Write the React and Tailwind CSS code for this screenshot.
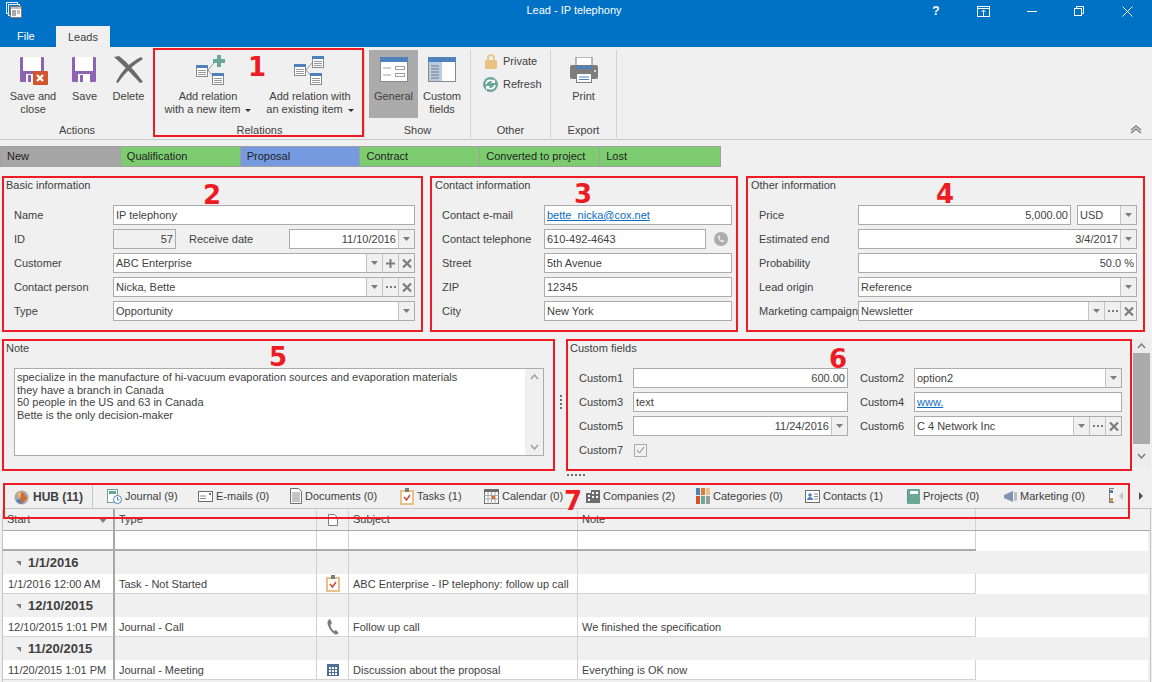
import React from "react";

const Caret = () => (
  <svg width="7" height="4" viewBox="0 0 7 4"><path d="M0 0h7L3.500 4z" fill="#7d7d7d" /></svg>
);
const XIcon = () => (
  <svg width="10" height="9" viewBox="0 0 10 9"><path d="M1 .5l8 8M9 .5l-8 8" stroke="#7d7d7d" strokeWidth="2.200" /></svg>
);
const Plus = () => (
  <svg width="9" height="9" viewBox="0 0 9 9"><path d="M4.500 0v9M0 4.500h9" stroke="#7d7d7d" strokeWidth="2" /></svg>
);
const Dots = () => (
  <svg width="10" height="2" viewBox="0 0 10 2"><path d="M0 0h2v2H0zM4 0h2v2H4zM8 0h2v2H8z" fill="#7d7d7d" /></svg>
);
const BTN = { c: <Caret />, x: <XIcon />, p: <Plus />, d: <Dots /> };

function Field({ value, right, link, buttons = "", disabled, className = "" }) {
  return (
    <div className={`flex h-5 items-stretch border border-[#ababab] ${disabled ? "bg-[#f0f0f0]" : "bg-white"} ${className}`}>
      <div className={`flex-1 min-w-0 px-[2px] leading-[18px] whitespace-nowrap overflow-hidden ${right ? "text-right" : ""} ${link ? "text-[#0b6cc2] underline" : ""}`}>
        {value}
      </div>
      {buttons.split("").map((b, i) => (
        <div key={i} className="w-4 flex items-center justify-center border-l border-[#c4c4c4] bg-[#f0f0f0]">{BTN[b]}</div>
      ))}
    </div>
  );
}

function Row({ label, labelW, children }) {
  return (
    <div className="flex h-5 items-center">
      <div style={{ width: labelW }} className="shrink-0 pt-[1px] whitespace-nowrap">{label}</div>
      {children}
    </div>
  );
}

function Panel({ title, className = "", titleClass = "pl-[2px]", children }) {
  return (
    <div className={`shrink-0 border-2 border-[#ed1c24] ${className}`}>
      <div className={`h-[14px] leading-[14px] whitespace-nowrap ${titleClass}`}>{title}</div>
      {children}
    </div>
  );
}

const SaveIcon = ({ withX }) => (
  <svg width="30" height="30" viewBox="0 0 30 30">
    <path d="M2 3a1 1 0 0 1 1-1h22a1 1 0 0 1 1 1v23a1 1 0 0 1-1 1H3a1 1 0 0 1-1-1z" fill="#8f63b3" />
    <rect x="5" y="2" width="18" height="14" fill="#fff" />
    <rect x="8" y="19" width="12" height="8" fill="#fff" />
    <rect x="10" y="20" width="3" height="7" fill="#8f63b3" />
    {withX && (
      <>
        <rect x="15" y="16" width="15" height="14" rx="1" fill="#d2552d" />
        <path d="M19 20l6 6M25 20l-6 6" stroke="#fff" strokeWidth="2.400" />
      </>
    )}
  </svg>
);

const DeleteIcon = () => (
  <svg width="30" height="28" viewBox="0 0 30 28" fill="#6b6b6b">
    <path d="M0 1L5 0C12 5 22 16 29 26L26 27C18 18 8 8 0 1z" />
    <path d="M29 3L27 1C18 5 8 14 2 26L4 27C10 18 19 9 29 3z" />
  </svg>
);

const Mini = ({ x, y }) => (
  <g>
    <rect x={x + 0.5} y={y + 0.5} width="11" height="11" fill="#fff" stroke="#8a8a8a" />
    <rect x={x} y={y} width="12" height="3" fill="#4f81bd" />
    <path d={`M${x + 2} ${y + 5.5}h8M${x + 2} ${y + 7.5}h8M${x + 2} ${y + 9.5}h8`} stroke="#9a9a9a" />
  </g>
);

const RelNew = () => (
  <div className="ml-[7px]">
    <svg width="32" height="30" viewBox="0 0 32 30" className="block">
      <path d="M12 15l6-7M12 15l6 7" stroke="#9a9a9a" />
      <Mini x={0} y={10} />
      <Mini x={16} y={18} />
      <path d="M17 6h12M23 0v12" stroke="#6ba797" strokeWidth="4" />
    </svg>
  </div>
);
const RelExisting = () => (
  <svg width="32" height="30" viewBox="0 0 32 30">
    <path d="M12 15l6-7M12 15l6 7" stroke="#9a9a9a" />
    <Mini x={0} y={9} />
    <Mini x={18} y={1} />
    <Mini x={16} y={18} />
  </svg>
);
const GeneralIcon = () => (
  <svg width="28" height="26" viewBox="0 0 28 26">
    <rect x=".5" y=".5" width="27" height="24" fill="#fff" stroke="#8a8a8a" />
    <rect width="28" height="5" fill="#4f81bd" />
    <path d="M3 11h8M3 18h8" stroke="#a0a0a0" />
    <rect x="15.500" y="9.500" width="9" height="3" fill="#fff" stroke="#a0a0a0" />
    <rect x="15.500" y="16.500" width="9" height="3" fill="#fff" stroke="#a0a0a0" />
  </svg>
);
const CustomIcon = () => (
  <svg width="28" height="26" viewBox="0 0 28 26">
    <rect x=".5" y=".5" width="27" height="24" fill="#fff" stroke="#8a8a8a" />
    <rect x="1" y="5" width="13" height="19" fill="#b8cce4" />
    <rect width="28" height="5" fill="#4f81bd" />
    <path d="M3 9h8M3 12h8M3 15h8M3 18h8M3 21h8" stroke="#7a7a7a" />
  </svg>
);
const Lock = () => (
  <svg width="12" height="15" viewBox="0 0 12 15">
    <path d="M3 7V4a3 3 0 0 1 6 0v3" fill="none" stroke="#e8c98e" strokeWidth="2" />
    <rect y="6" width="12" height="9" rx="1" fill="#eac083" />
  </svg>
);
const RefreshI = () => (
  <svg width="15" height="15" viewBox="0 0 15 15">
    <circle cx="7.500" cy="7.500" r="7.500" fill="#6ba797" />
    <path d="M3 7a4.500 4.500 0 0 1 8-2M12 8a4.500 4.500 0 0 1-8 2" fill="none" stroke="#fff" strokeWidth="1.600" />
    <path d="M12 2v4H8zM3 13V9h4z" fill="#fff" />
  </svg>
);
const Printer = () => (
  <svg width="28" height="26" viewBox="0 0 28 26">
    <rect x="6" y="0" width="16" height="10" fill="#fff" stroke="#7d7d7d" />
    <path d="M2 8h24a2 2 0 0 1 2 2v10a2 2 0 0 1-2 2H2a2 2 0 0 1-2-2V10a2 2 0 0 1 2-2z" fill="#7d7d7d" />
    <rect x="6" y="9" width="16" height="3" fill="#4f81bd" />
    <rect x="24" y="13" width="2" height="2" fill="#d8d8d8" />
    <rect x="6.500" y="16.500" width="15" height="9" fill="#fff" stroke="#7d7d7d" />
    <path d="M9 20h10M9 22.500h10" stroke="#4f81bd" />
  </svg>
);

function RibbonBtn({ icon, lines, caret, w, active }) {
  return (
    <div style={{ width: w }} className={`h-[68px] flex flex-col items-center pt-[3px] ${active ? "bg-[#ababab]" : ""}`}>
      <div className="h-[33px] flex items-center justify-center">{icon}</div>
      <div className="mt-[4px] text-center leading-[13px]">
        {lines.map((l, i) => (
          <div key={i} className="whitespace-nowrap">
            {l}
            {caret && i === lines.length - 1 && (
              <span className="inline-block ml-[5px] align-middle w-0 h-0 border-x-[3px] border-t-[3px] border-x-transparent border-t-[#333]" />
            )}
          </div>
        ))}
      </div>
    </div>
  );
}

function Group({ label, w, children }) {
  return (
    <div style={{ width: w }} className="shrink-0 flex flex-col h-[88px] border-r border-[#d2d2d2]">
      <div className="h-[68px] flex justify-start">{children}</div>
      <div className="h-[15px] mt-auto text-center leading-[15px] whitespace-nowrap">{label}</div>
    </div>
  );
}

const TabIcons = {
  hub: (
    <svg width="15" height="15" viewBox="0 0 15 15">
      <circle cx="7.500" cy="7.500" r="7" fill="#a8a8a8" />
      <path d="M7.500 1L13 8l-5 6-2-5z" fill="#d2692d" />
      <path d="M2 10l4-1 2 5-4-1z" fill="#4f81bd" />
      <path d="M3 4l3 5 1.500-8z" fill="#e8b96e" />
    </svg>
  ),
  journal: (
    <svg width="15" height="15" viewBox="0 0 15 15">
      <rect x=".5" y=".5" width="10" height="13" fill="#fff" stroke="#6ba797" />
      <rect x="2" y="2" width="7" height="3" fill="#6ba797" />
      <circle cx="10.500" cy="10.500" r="4" fill="#fff" stroke="#4f81bd" />
      <path d="M10.500 8v3h2" fill="none" stroke="#4f81bd" />
    </svg>
  ),
  email: (
    <svg width="15" height="11" viewBox="0 0 15 11">
      <rect x=".5" y=".5" width="14" height="10" fill="#fff" stroke="#6d6d6d" />
      <path d="M2 5h6M2 7.500h6" stroke="#8a8a8a" />
      <rect x="11" y="2" width="2" height="2" fill="#6d6d6d" />
    </svg>
  ),
  doc: (
    <svg width="12" height="16" viewBox="0 0 12 16">
      <path d="M.5.5h8l3 3v12H.500z" fill="#fff" stroke="#6d6d6d" />
      <path d="M2 5h8M2 7h8M2 9h8M2 11h8M2 13h8" stroke="#8a8a8a" />
    </svg>
  ),
  task: (
    <svg width="14" height="17" viewBox="0 0 14 17">
      <rect y="2" width="14" height="15" fill="#e8c08a" />
      <rect x="2" y="4" width="10" height="11" fill="#fff" />
      <rect x="5" y="0" width="4" height="4" fill="#7d7d7d" />
      <path d="M4 9l2.500 3L10 7" fill="none" stroke="#d2492d" strokeWidth="1.500" />
    </svg>
  ),
  cal: (
    <svg width="15" height="15" viewBox="0 0 15 15">
      <rect x=".5" y=".5" width="14" height="14" fill="#fff" stroke="#6d6d6d" />
      <rect width="15" height="3" fill="#6d6d6d" />
      <path d="M4 3v12M7.500 3v12M11 3v12M0 6.500h15M0 10h15" stroke="#a8a8a8" />
      <rect x="8" y="7" width="3" height="3" fill="#d2692d" />
    </svg>
  ),
  company: (
    <svg width="14" height="14" viewBox="0 0 14 14">
      <path d="M0 4h5V1h9v13H0z" fill="#6d6d6d" />
      <path d="M2 6h2v2H2zM6 3h2v2H6zM10 3h2v2h-2zM6 7h2v2H6zM10 7h2v2h-2zM2 10h2v2H2z" fill="#fff" />
    </svg>
  ),
  cat: (
    <svg width="14" height="16" viewBox="0 0 14 16">
      <rect width="4" height="7" fill="#4f81bd" />
      <rect x="5" width="4" height="7" fill="#e07b2d" />
      <rect x="10" width="4" height="7" fill="#e8c08a" />
      <rect y="8" width="4" height="8" fill="#d2552d" />
      <rect x="5" y="8" width="4" height="8" fill="#6ba797" />
      <rect x="10" y="8" width="4" height="8" fill="#9a9a9a" />
    </svg>
  ),
  contact: (
    <svg width="15" height="13" viewBox="0 0 15 13">
      <rect x=".5" y=".5" width="14" height="12" fill="#fff" stroke="#6d6d6d" />
      <circle cx="5" cy="5" r="1.800" fill="#4f81bd" />
      <path d="M2 10c0-2 1.500-3 3-3s3 1 3 3z" fill="#4f81bd" />
      <path d="M9 4h4M9 6.500h4M9 9h4" stroke="#8a8a8a" />
    </svg>
  ),
  project: (
    <svg width="13" height="15" viewBox="0 0 13 15">
      <rect width="13" height="15" rx="1" fill="#6ba797" />
      <rect x="3" y="2" width="8" height="3" fill="#fff" />
      <path d="M0 2v11" stroke="#4d4d4d" strokeDasharray="1 1" />
    </svg>
  ),
  marketing: (
    <svg width="13" height="11" viewBox="0 0 13 11">
      <path d="M0 4l9-4v11L0 7z" fill="#7f93b0" />
      <rect x="10" y="1" width="3" height="9" rx="1" fill="#bdbdbd" />
    </svg>
  ),
};

const TABS = [
  ["journal", "Journal (9)", 93, 14],
  ["email", "E-mails (0)", 92, 12],
  ["doc", "Documents (0)", 110, 12],
  ["task", "Tasks (1)", 84, 12],
  ["cal", "Calendar (0)", 102, 12],
  ["company", "Companies (2)", 110, 12],
  ["cat", "Categories (0)", 109, 12],
  ["contact", "Contacts (1)", 102, 12],
  ["project", "Projects (0)", 97, 12],
  ["marketing", "Marketing (0)", 104, 12],
];

const COLS = "grid grid-cols-[112px_202px_32px_229px_398px_172px]";

function Cell({ children, thick, center, noBorder, className = "" }) {
  return (
    <div className={`min-w-0 whitespace-nowrap overflow-hidden px-[4px] flex items-center ${center ? "justify-center" : ""} ${thick ? "border-r-2 border-[#a8a8a8]" : noBorder ? "" : "border-r border-[#d2d2d2]"} ${className}`}>
      {children}
    </div>
  );
}

function GroupRow({ label }) {
  return (
    <div className={`${COLS} h-[23px] bg-[#f0f0f0]`}>
      <Cell thick className="overflow-visible pt-[1px]">
        <span className="inline-block ml-[9px] mr-[7px] w-0 h-0 border-l-[5px] border-t-[5px] border-l-transparent border-t-[#7d7d7d]" />
        <span className="font-bold text-[13px]">{label}</span>
      </Cell>
      <Cell /><Cell /><Cell /><Cell noBorder /><Cell noBorder />
    </div>
  );
}

function DataRow({ start, type, icon, subject, note }) {
  return (
    <div className={`${COLS} h-[20px]`}>
      <Cell thick className="bg-white pl-[5px] pt-[1px] border-b border-b-[#d2d2d2]">{start}</Cell>
      <Cell className="bg-white pt-[1px] border-b border-b-[#d2d2d2]">{type}</Cell>
      <Cell center className="bg-white px-0 border-b border-b-[#d2d2d2]">{icon}</Cell>
      <Cell className="bg-white pt-[1px] border-b border-b-[#d2d2d2]">{subject}</Cell>
      <Cell className="bg-white pt-[1px] border-b border-b-[#d2d2d2]">{note}</Cell>
      <Cell noBorder className="bg-white" />
    </div>
  );
}

const Num = ({ n, x, y }) => (
  <div style={{ left: x - 9, top: y - 15 }} className="absolute font-['DejaVu_Sans'] font-bold text-[26px] leading-[30px] text-[#ed1c24]">{n}</div>
);

export default function App() {
  return (
    <div className="relative w-[1152px] h-[682px] overflow-hidden bg-[#f0f0f0] text-[#3f3f3f] text-[11px] font-['Liberation_Sans',sans-serif]">
      {/* Title bar */}
      <div className="h-[47px] bg-[#0072c6] flex flex-col">
        <div className="h-[25px] flex items-start text-white">
          <div className="w-[240px] pl-[6px] pt-[2px]">
            <svg width="16" height="16" viewBox="0 0 16 16" fill="none" stroke="#e8eef5">
              <rect x=".5" y=".5" width="11" height="11" />
              <rect x="2.500" y="2.500" width="11" height="11" fill="#0072c6" />
              <rect x="4.500" y="4.500" width="11" height="11" fill="#fff" stroke="#7d7d7d" />
              <rect x="6" y="8" width="4" height="6" fill="#a8a8a8" stroke="none" />
              <path d="M5 6h10M11 9h3M11 11h3" stroke="#7d7d7d" />
            </svg>
          </div>
          <div className="flex-1 text-center pr-[4px] pt-[2px] leading-[16px]">Lead - IP telephony</div>
          <div className="w-[240px] flex justify-end pr-[1px]">
            <div className="w-[48px] h-[22px] flex items-center justify-center font-bold text-[12px]">?</div>
            <div className="w-[48px] h-[22px] flex items-center justify-center">
              <svg width="13" height="11" viewBox="0 0 13 11" fill="none" stroke="#fff"><rect x=".5" y=".5" width="12" height="10" /><path d="M0 2.500h13M6.500 10V4M4.500 6l2-2 2 2" /></svg>
            </div>
            <div className="w-[48px] h-[22px] flex items-center justify-center"><div className="w-[10px] h-px bg-white" /></div>
            <div className="w-[48px] h-[22px] flex items-center justify-center">
              <svg width="10" height="10" viewBox="0 0 10 10" fill="none" stroke="#fff"><rect x=".5" y="2.500" width="7" height="7" /><path d="M2.500 2.500v-2h7v7h-2" /></svg>
            </div>
            <div className="w-[48px] h-[22px] flex items-center justify-center">
              <svg width="11" height="11" viewBox="0 0 11 11" stroke="#fff"><path d="M.5.5l10 10M10.500.5l-10 10" /></svg>
            </div>
          </div>
        </div>
        <div className="h-[22px] flex">
          <div className="w-[56px] pl-[17px] text-white leading-[22px]">File</div>
          <div className="w-[54px] bg-[#f0f0f0] text-center leading-[22px] mt-[1px]">Leads</div>
        </div>
      </div>

      {/* Ribbon */}
      <div className="h-[93px] border-b border-[#c8c8c8] pt-[3px] flex relative">
        <div className="flex h-[88px]">
          <Group label="Actions" w={155}>
            <div className="w-[5px]" />
            <RibbonBtn w={56} icon={<SaveIcon withX />} lines={["Save and", "close"]} />
            <RibbonBtn w={47} icon={<SaveIcon />} lines={["Save"]} />
            <RibbonBtn w={41} icon={<DeleteIcon />} lines={["Delete"]} />
          </Group>
          <Group label="Relations" w={210}>
            <div className="w-[3px]" />
            <RibbonBtn w={100} icon={<RelNew />} lines={["Add relation", "with a new item"]} caret />
            <RibbonBtn w={104} icon={<RelExisting />} lines={["Add relation with", "an existing item"]} caret />
          </Group>
          <Group label="Show" w={106}>
            <div className="w-[4px]" />
            <RibbonBtn w={49} active icon={<GeneralIcon />} lines={["General"]} />
            <RibbonBtn w={48} icon={<CustomIcon />} lines={["Custom", "fields"]} />
          </Group>
          <Group label="Other" w={80}>
            <div className="w-full pl-[12px] pt-[4px] flex flex-col gap-[8px]">
              <div className="h-[15px] flex items-center gap-[5px]"><span className="w-[15px] flex justify-center"><Lock /></span>Private</div>
              <div className="h-[15px] flex items-center gap-[5px]"><RefreshI />Refresh</div>
            </div>
          </Group>
          <Group label="Export" w={66}>
            <RibbonBtn w={66} icon={<Printer />} lines={["Print"]} />
          </Group>
        </div>
        <div className="absolute right-[10px] bottom-[5px]">
          <svg width="12" height="9" viewBox="0 0 12 9" fill="none" stroke="#7d7d7d" strokeWidth="1.500"><path d="M1 5l5-4 5 4M1 8l5-4 5 4" /></svg>
        </div>
      </div>

      {/* Status strip */}
      <div className="mt-[6px] flex w-[721px] h-[21px] border border-[#a0a0a0] bg-[#7dcd70]">
        {[
          ["New", "bg-[#a6a6a6]"],
          ["Qualification", ""],
          ["Proposal", "bg-[#769ae0]"],
          ["Contract", ""],
          ["Converted to project", ""],
          ["Lost", ""],
        ].map(([t, c], i) => (
          <div key={t} className={`w-[120px] pl-[6px] leading-[18px] whitespace-nowrap text-[#1f1f1f] ${i < 5 ? "border-r border-[#a0a0a0]" : ""} ${c}`}>{t}</div>
        ))}
      </div>

      {/* Row 1 */}
      <div className="mt-[9px] flex pl-[2px] h-[156px]">
        <Panel title="Basic information" className="w-[421px] h-[156px]">
          <div className="mt-[13px] flex flex-col gap-1 pl-[10px] pr-[6px]">
            <Row label="Name" labelW={99}><Field value="IP telephony" className="flex-1" /></Row>
            <Row label="ID" labelW={99}>
              <Field value="57" right disabled className="w-[63px]" />
              <div className="w-[113px] pl-[13px] pt-[1px] whitespace-nowrap">Receive date</div>
              <Field value="11/10/2016" right buttons="c" className="flex-1" />
            </Row>
            <Row label="Customer" labelW={99}><Field value="ABC Enterprise" buttons="cpx" className="flex-1" /></Row>
            <Row label="Contact person" labelW={99}><Field value="Nicka, Bette" buttons="cdx" className="flex-1" /></Row>
            <Row label="Type" labelW={99}><Field value="Opportunity" buttons="c" className="flex-1" /></Row>
          </div>
        </Panel>
        <Panel title="Contact information" titleClass="pl-[3px]" className="ml-[7px] w-[308px] h-[156px]">
          <div className="mt-[13px] flex flex-col gap-1 pl-[10px] pr-[4px]">
            <Row label="Contact e-mail" labelW={102}><Field value="bette_nicka@cox.net" link className="flex-1" /></Row>
            <Row label="Contact telephone" labelW={102}>
              <Field value="610-492-4643" className="flex-1" />
              <div className="w-[26px] flex justify-center pl-[4px]">
                <svg width="14" height="14" viewBox="0 0 14 14"><circle cx="7" cy="7" r="7" fill="#ababab" /><path d="M5 3l1.500 2-1 1.500c.5 1 1 1.500 2 2l1-1 2 1.500c-.5 1.500-2 1.500-3 1-2-1-3-2.500-3.500-4C4 5 4 3.500 5 3z" fill="#e8e8e8" /></svg>
              </div>
            </Row>
            <Row label="Street" labelW={102}><Field value="5th Avenue" className="flex-1" /></Row>
            <Row label="ZIP" labelW={102}><Field value="12345" className="flex-1" /></Row>
            <Row label="City" labelW={102}><Field value="New York" className="flex-1" /></Row>
          </div>
        </Panel>
        <Panel title="Other information" titleClass="pl-[3px]" className="ml-[8px] w-[399px] h-[156px]">
          <div className="mt-[13px] flex flex-col gap-1 pl-[11px] pr-[6px]">
            <Row label="Price" labelW={99}>
              <Field value="5,000.00" right className="flex-1" />
              <Field value="USD" buttons="c" className="w-[60px] ml-[6px]" />
            </Row>
            <Row label="Estimated end" labelW={99}><Field value="3/4/2017" right buttons="c" className="flex-1" /></Row>
            <Row label="Probability" labelW={99}><Field value="50.0 %" right className="flex-1" /></Row>
            <Row label="Lead origin" labelW={99}><Field value="Reference" buttons="c" className="flex-1" /></Row>
            <Row label="Marketing campaign" labelW={99}><Field value="Newsletter" buttons="cdx" className="flex-1" /></Row>
          </div>
        </Panel>
      </div>

      {/* Row 2 */}
      <div className="mt-[7px] flex pl-[2px] h-[132px]">
        <Panel title="Note" className="w-[553px] h-[132px]">
          <div className="mt-[13px] ml-[10px] w-[530px] h-[88px] border border-[#ababab] bg-white flex">
            <div className="flex-1 pl-[2px] pt-[2px] leading-[12.5px] whitespace-nowrap overflow-hidden">
              <div>specialize in the manufacture of hi-vacuum evaporation sources and evaporation materials</div>
              <div>they have a branch in Canada</div>
              <div>50 people in the US and 63 in Canada</div>
              <div>Bette is the only decision-maker</div>
            </div>
            <div className="w-[18px] bg-[#f0f0f0] flex flex-col items-center justify-between py-[5px]">
              <svg width="9" height="6" viewBox="0 0 9 6" fill="none" stroke="#a0a0a0" strokeWidth="1.500"><path d="M1 5l3.500-4L8 5" /></svg>
              <svg width="9" height="6" viewBox="0 0 9 6" fill="none" stroke="#a0a0a0" strokeWidth="1.500"><path d="M1 1l3.500 4L8 1" /></svg>
            </div>
          </div>
        </Panel>
        <div className="w-[11px] h-[132px] flex flex-col items-center justify-center gap-[2px] pb-[7px]">
          {[0, 1, 2, 3].map((i) => <div key={i} className="w-[2px] h-[2px] bg-[#6d6d6d]" />)}
        </div>
        <Panel title="Custom fields" className="w-[566px] h-[132px]">
          <div className="mt-[13px] flex flex-col gap-1 pl-[11px] pr-[8px]">
            <Row label="Custom1" labelW={54}>
              <Field value="600.00" right className="w-[215px]" />
              <div className="w-[66px] pl-[12px] pt-[1px]">Custom2</div>
              <Field value="option2" buttons="c" className="flex-1" />
            </Row>
            <Row label="Custom3" labelW={54}>
              <Field value="text" className="w-[215px]" />
              <div className="w-[66px] pl-[12px] pt-[1px]">Custom4</div>
              <Field value="www." link className="flex-1" />
            </Row>
            <Row label="Custom5" labelW={54}>
              <Field value="11/24/2016" right buttons="c" className="w-[215px]" />
              <div className="w-[66px] pl-[12px] pt-[1px]">Custom6</div>
              <Field value="C 4 Network Inc" buttons="cdx" className="flex-1" />
            </Row>
            <Row label="Custom7" labelW={54}>
              <div className="w-[13px] h-[13px] ml-[1px] border border-[#ababab] bg-[#f0f0f0] flex items-center justify-center">
                <svg width="9" height="8" viewBox="0 0 9 8" fill="none" stroke="#7d7d7d"><path d="M1 4l2.500 3L8 1" /></svg>
              </div>
            </Row>
          </div>
        </Panel>
        <div className="ml-[1px] w-[17px] h-[128px] flex flex-col items-center bg-[#ececec]">
          <div className="h-[14px] flex items-center">
            <svg width="9" height="6" viewBox="0 0 9 6" fill="none" stroke="#7d7d7d" strokeWidth="1.500"><path d="M1 5l3.500-4L8 5" /></svg>
          </div>
          <div className="w-full h-[91px] bg-[#ababab]" />
          <div className="mt-auto h-[22px] flex items-center">
            <svg width="9" height="6" viewBox="0 0 9 6" fill="none" stroke="#7d7d7d" strokeWidth="1.500"><path d="M1 1l3.500 4L8 1" /></svg>
          </div>
        </div>
      </div>

      {/* H splitter */}
      <div className="h-[12px] flex items-center gap-[2px] pl-[567px] pb-[4px]">
        {[0, 1, 2, 3, 4].map((i) => <div key={i} className="w-[2px] h-[2px] bg-[#6d6d6d]" />)}
      </div>

      {/* Tabs */}
      <div className="h-[26px] ml-[3px] flex items-stretch border-b border-[#c4c4c4] relative overflow-hidden">
        <div className="w-[90px] h-[26px] shrink-0 pl-[10px] pt-[1px] flex items-center gap-[4px] border border-b-0 border-[#c4c4c4] bg-[#f0f0f0] font-bold text-[12px] whitespace-nowrap">
          {TabIcons.hub}HUB (11)
        </div>
        {TABS.map(([ic, t, w, pl]) => (
          <div key={t} style={{ width: w, paddingLeft: pl }} className="shrink-0 pt-[1px] flex items-center gap-[3px] whitespace-nowrap">
            {TabIcons[ic]}{t}
          </div>
        ))}
        <div className="shrink-0 pl-[13px] flex items-center">
          <svg width="5" height="15" viewBox="0 0 5 15"><rect x=".5" y=".5" width="8" height="14" fill="#fff" stroke="#7d7d7d" /><rect x="1" y="2" width="3" height="3" fill="#4f81bd" /><rect x="1" y="10" width="3" height="4" fill="#c89a5f" /></svg>
        </div>
        <div className="absolute left-[1116px] top-[9px] w-0 h-0 border-y-[4px] border-r-[4px] border-y-transparent border-r-[#c4c4c4]" />
        <div className="absolute left-[1136px] top-[9px] w-0 h-0 border-y-[4px] border-l-[4px] border-y-transparent border-l-[#4d4d4d]" />
      </div>

      {/* Grid */}
      <div className="ml-[2px] w-[1149px] h-[173px] border-x border-[#c4c4c4]">
        <div className={`${COLS} h-[22px] border-b border-[#ababab]`}>
          <Cell thick className="justify-between">
            <span>Start</span>
            <span className="w-0 h-0 mr-[1px] border-x-[5px] border-t-[6px] border-x-transparent border-t-[#7d7d7d]" />
          </Cell>
          <Cell className="border-[#ababab]">Type</Cell>
          <Cell center className="border-[#ababab]">
            <svg width="10" height="12" viewBox="0 0 10 12"><path d="M.5.5h6l3 3v8H.500z" fill="#fff" stroke="#7d7d7d" /></svg>
          </Cell>
          <Cell className="border-[#ababab]">Subject</Cell>
          <Cell className="border-[#ababab]">Note</Cell>
          <Cell noBorder />
        </div>
        <div className={`${COLS} h-[20px]`}>
          <div className="col-span-5 grid grid-cols-[112px_202px_32px_229px_398px] border-b-2 border-[#ababab] bg-white">
            <div className="border-r-2 border-[#a8a8a8]" />
            <div className="border-r border-[#d2d2d2]" />
            <div className="border-r border-[#d2d2d2]" />
            <div className="border-r border-[#d2d2d2]" />
            <div className="border-r border-[#d2d2d2]" />
          </div>
          <div className="bg-white" />
        </div>
        <GroupRow label="1/1/2016" />
        <DataRow start="1/1/2016 12:00 AM" type="Task - Not Started" icon={TabIcons.task} subject="ABC Enterprise - IP telephony: follow up call" note="" />
        <GroupRow label="12/10/2015" />
        <DataRow
          start="12/10/2015 1:01 PM"
          type="Journal - Call"
          icon={
            <svg width="12" height="16" viewBox="0 0 12 16"><path d="M3 0L5 4 3.500 6c0 2 2 5 3.500 6l2-1 2.500 3c-1 1.500-2.500 2-4 1C4 13 .5 7 .5 4 .5 2 1.500.500 3 0z" fill="#7d7d7d" /></svg>
          }
          subject="Follow up call"
          note="We finished the specification"
        />
        <GroupRow label="11/20/2015" />
        <DataRow
          start="11/20/2015 1:01 PM"
          type="Journal - Meeting"
          icon={
            <svg width="12" height="12" viewBox="0 0 12 12"><rect width="12" height="12" fill="#4d6f95" /><path d="M2 3h2v2H2zM5 3h2v2H5zM8 3h2v2H8zM2 6h2v2H2zM5 6h2v2H5zM8 6h2v2H8zM2 9h2v2H2zM5 9h2v2H5zM8 9h2v2H8z" fill="#fff" /></svg>
          }
          subject="Discussion about the proposal"
          note="Everything is OK now"
        />
      </div>

      {/* Annotations */}
      <div className="absolute left-[153px] top-[48px] w-[211px] h-[89px] border-2 border-[#ed1c24]" />
      <div className="absolute left-[3px] top-[483px] w-[1127px] h-[36px] border-2 border-[#ed1c24]" />
      <Num n="1" x={257} y={67} />
      <Num n="2" x={212} y={195} />
      <Num n="3" x={583} y={194} />
      <Num n="4" x={945} y={194} />
      <Num n="5" x={278} y={357} />
      <Num n="6" x={838} y={359} />
      <Num n="7" x={573} y={501} />
    </div>
  );
}
